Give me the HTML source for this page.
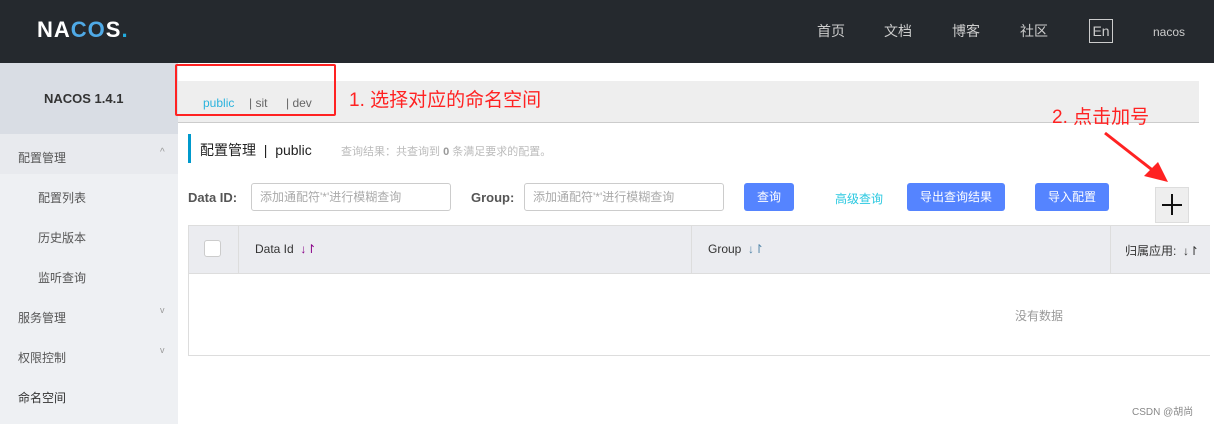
<!DOCTYPE html><html><head><meta charset="utf-8"><style>
*{margin:0;padding:0;box-sizing:border-box}
body{width:1214px;height:424px;overflow:hidden;background:#fff;font-family:"Liberation Sans","Noto Sans CJK SC",sans-serif;position:relative;font-size:12px;color:#333}
.a{position:absolute}
.top{left:0;top:0;width:1214px;height:63px;background:#25292e}
.nav{color:#ccc;font-size:14px;top:21px}
.side{left:0;top:63px;width:178px;height:361px;background:#eef0f3}
.si{color:#555;font-size:12px}
.btn{background:#5584ff;color:#fff;border-radius:3px;height:28px;line-height:28px;text-align:center;font-size:12px;top:183px}
.inp{border:1px solid #ccc;border-radius:3px;height:28px;top:183px;color:#aaa;font-size:12px;line-height:26px;padding-left:8px;width:200px}
</style></head><body>
<div class="a top"></div>
<div class="a" style="left:37px;top:17px;color:#fff;font-size:22px;font-weight:bold;letter-spacing:1px">NA<span style="color:#4fa9e6">CO</span>S<span style="color:#2ad">.</span></div>
<div class="a nav" style="left:817px">首页</div>
<div class="a nav" style="left:884px">文档</div>
<div class="a nav" style="left:952px">博客</div>
<div class="a nav" style="left:1020px">社区</div>
<div class="a" style="left:1089px;top:19px;width:24px;height:24px;border:1px solid #ccc;color:#ccc;font-size:14px;text-align:center;line-height:22px">En</div>
<div class="a" style="left:1153px;top:25px;color:#ccc;font-size:12px">nacos</div>
<div class="a side"></div>
<div class="a" style="left:0;top:63px;width:178px;height:71px;background:#d9dde4"></div>
<div class="a" style="left:44px;top:91px;font-weight:bold;font-size:13px;color:#333">NACOS 1.4.1</div>
<div class="a" style="left:0;top:134px;width:178px;height:40px;background:#e8eaee"></div>
<div class="a si" style="left:18px;top:149px">配置管理</div><div class="a" style="left:160px;top:147px;color:#999;font-size:10px">^</div>
<div class="a si" style="left:38px;top:189px">配置列表</div>
<div class="a si" style="left:38px;top:229px">历史版本</div>
<div class="a si" style="left:38px;top:269px">监听查询</div>
<div class="a si" style="left:18px;top:309px">服务管理</div><div class="a" style="left:160px;top:305px;color:#999;font-size:9px">v</div>
<div class="a si" style="left:18px;top:349px">权限控制</div><div class="a" style="left:160px;top:345px;color:#999;font-size:9px">v</div>
<div class="a si" style="left:18px;top:389px;color:#333">命名空间</div>
<div class="a" style="left:178px;top:81px;width:1021px;height:42px;background:#eee;border-bottom:1px solid #ccc"></div>
<div class="a" style="left:203px;top:96px;font-size:12px;color:#2bb3dd">public</div>
<div class="a" style="left:249px;top:96px;font-size:12px;color:#666">| sit</div>
<div class="a" style="left:286px;top:96px;font-size:12px;color:#666">| dev</div>
<div class="a" style="left:175px;top:64px;width:161px;height:52px;border:2px solid #f22;border-radius:2px"></div>
<div class="a" style="left:349px;top:85px;color:#f22;font-size:19px">1. 选择对应的命名空间</div>
<div class="a" style="left:1052px;top:102px;color:#f22;font-size:19px">2. 点击加号</div>
<svg class="a" style="left:1100px;top:128px" width="75" height="60"><path d="M5 5 L60 48" stroke="#f22" stroke-width="3"/><path d="M68 54 L44 48 L58 34 Z" fill="#f22"/></svg>
<div class="a" style="left:188px;top:134px;width:3px;height:29px;background:#09c"></div>
<div class="a" style="left:200px;top:140px;font-size:14px;color:#222">配置管理 &nbsp;| &nbsp;public</div>
<div class="a" style="left:341px;top:143px;font-size:11px;color:#bbb">查询结果：共查询到 <b style="color:#999">0</b> 条满足要求的配置。</div>
<div class="a" style="left:188px;top:190px;font-weight:bold;color:#555;font-size:13px">Data ID:</div>
<div class="a inp" style="left:251px">添加通配符'*'进行模糊查询</div>
<div class="a" style="left:471px;top:190px;font-weight:bold;color:#555;font-size:13px">Group:</div>
<div class="a inp" style="left:524px">添加通配符'*'进行模糊查询</div>
<div class="a btn" style="left:744px;width:50px">查询</div>
<div class="a" style="left:835px;top:190px;color:#2ac8e0">高级查询</div>
<div class="a btn" style="left:907px;width:98px">导出查询结果</div>
<div class="a btn" style="left:1035px;width:74px">导入配置</div>
<div class="a" style="left:1155px;top:187px;width:34px;height:36px;background:#eee;border:1px solid #ddd"></div>
<div class="a" style="left:1162px;top:204px;width:20px;height:2px;background:#111"></div>
<div class="a" style="left:1171px;top:194px;width:2px;height:21px;background:#111"></div>
<div class="a" style="left:188px;top:225px;width:1022px;height:131px;border:1px solid #ddd;border-right:none"></div>
<div class="a" style="left:189px;top:226px;width:1021px;height:48px;background:#ebecf0;border-bottom:1px solid #ddd"></div>
<div class="a" style="left:238px;top:226px;width:1px;height:48px;background:#ddd"></div>
<div class="a" style="left:691px;top:226px;width:1px;height:48px;background:#ddd"></div>
<div class="a" style="left:1110px;top:226px;width:1px;height:48px;background:#ddd"></div>
<div class="a" style="left:204px;top:240px;width:17px;height:17px;border:1px solid #ccc;border-radius:3px;background:#fff"></div>
<div class="a" style="left:255px;top:242px;color:#333">Data Id &nbsp;<span style="color:#808">↓↾</span></div>
<div class="a" style="left:708px;top:242px;color:#333">Group &nbsp;<span style="color:#58a">↓↾</span></div>
<div class="a" style="left:1125px;top:242px;color:#333">归属应用: &nbsp;↓↾</div>
<div class="a" style="left:1015px;top:307px;color:#999">没有数据</div>
<div class="a" style="left:1132px;top:403px;color:#888;font-size:10px">CSDN @胡尚</div>
</body></html>
